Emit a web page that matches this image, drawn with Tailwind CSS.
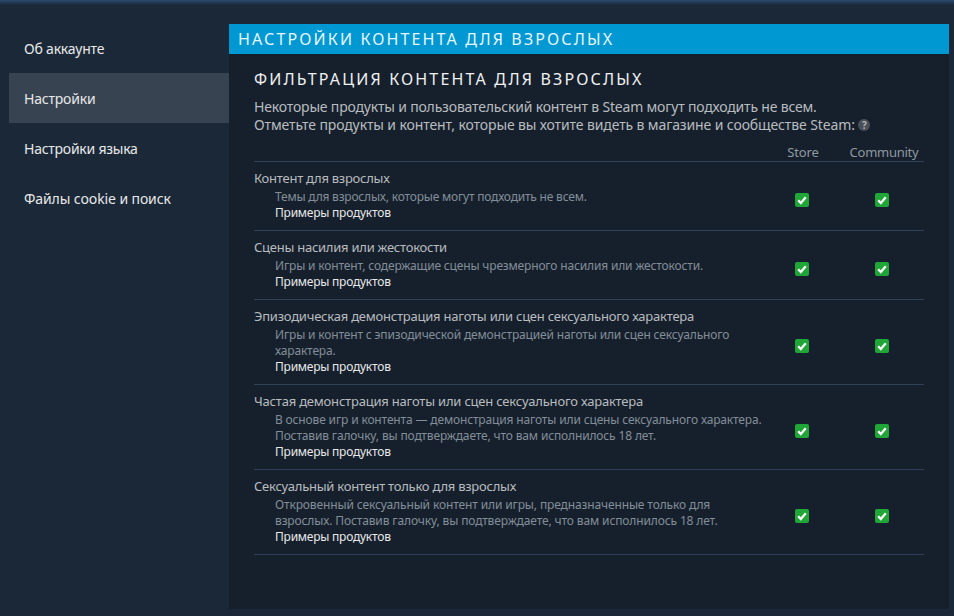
<!DOCTYPE html>
<html lang="ru">
<head>
    <meta charset="UTF-8">
    <title>Настройки контента</title>
    <script src="https://cdn.jsdelivr.net/npm/@tailwindcss/browser@4"></script>
</head>
<body class="bg-[#1b2838] h-[616px] w-[954px] overflow-hidden font-['Noto_Sans',sans-serif]">
    <div class="h-[5px] bg-gradient-to-b from-[#2a4a6e] to-[#1b2838]"></div>
    <div class="flex pt-[19px] pl-[9px] pr-[5px]">
        <!-- nav -->
        <nav class="w-[220px] -mt-[1px] text-[14px] tracking-[-0.2px] text-[#e8e8e8]">
            <div class="h-[50px] pl-[15px] flex items-center">Об аккаунте</div>
            <div class="h-[50px] pl-[15px] flex items-center bg-[#384352]">Настройки</div>
            <div class="h-[50px] pl-[15px] flex items-center tracking-[-0.25px]">Настройки языка</div>
            <div class="h-[50px] pl-[15px] flex items-center tracking-[-0.1px]">Файлы cookie и поиск</div>
        </nav>

        <main class="w-[720px] h-[585px] bg-[#16202d]">
            <div class="h-[30px] bg-[#0098d2] pl-[9px] flex items-center text-[16px] tracking-[2.13px] text-[#e6f5fb]">НАСТРОЙКИ КОНТЕНТА ДЛЯ ВЗРОСЛЫХ</div>
            <div class="px-[25px]">
                <h2 class="mt-[13px] text-[16px] leading-[24px] tracking-[2.16px] text-[#f0f0f0]">ФИЛЬТРАЦИЯ КОНТЕНТА ДЛЯ ВЗРОСЛЫХ</h2>
                <p class="mt-[7px] text-[14px] leading-[18px] text-[#b8bcbf]">
                    <span class="tracking-[-0.18px]">Некоторые продукты и пользовательский контент в Steam могут подходить не всем.</span><br>
                    <span class="tracking-[-0.12px]">Отметьте продукты и контент, которые вы хотите видеть в магазине и сообществе Steam:</span>
                    <span class="inline-flex w-[12px] h-[12px] rounded-full bg-[#4a4f57] text-[#b0b4b8] text-[10px] font-bold items-center justify-center align-[1px]">?</span>
                </p>
                <div class="flex h-[22px] mt-[6px] pt-[3px] text-[13px] tracking-[-0.25px] text-[#8f98a0] border-b border-[#2f4058]">
                    <div class="flex-1"></div>
                    <div class="w-[80px] pl-[2px] text-center leading-[18px] tracking-[-0.1px]">Store</div>
                    <div class="w-[80px] text-center pl-[4px] leading-[18px]">Community</div>
                    <div class="w-[2px]"></div>
                </div>

                <div class="flex h-[69px] border-b border-[#2f4058]">
                    <div class="flex-1 min-w-0 pt-[8px] whitespace-nowrap">
                        <div class="text-[13px] leading-[17px] tracking-[-0.25px] text-[#b8bcbf]">Контент для взрослых</div>
                        <div class="pl-[21px] text-[12px] leading-[16px] tracking-[-0.2px] text-[#838e98] mt-[2px]">Темы для взрослых, которые могут подходить не всем.</div>
                        <div class="pl-[21px] text-[12px] leading-[16px] tracking-[-0.23px] text-[#e8e8e8]">Примеры продуктов</div>
                    </div>
                    <div class="w-[80px] flex items-center justify-center pt-[8px]"><svg class="w-[14px] h-[14px]" viewBox="0 0 14 14"><rect width="14" height="14" rx="2" fill="#1fa637"/><path d="M3.2 7.2 L5.8 10 L10.8 4.2" fill="none" stroke="#fff" stroke-width="2.2"/></svg></div>
                    <div class="w-[80px] flex items-center justify-center pt-[8px]"><svg class="w-[14px] h-[14px]" viewBox="0 0 14 14"><rect width="14" height="14" rx="2" fill="#1fa637"/><path d="M3.2 7.2 L5.8 10 L10.8 4.2" fill="none" stroke="#fff" stroke-width="2.2"/></svg></div>
                    <div class="w-[2px]"></div>
                </div>

                <div class="flex h-[69px] border-b border-[#2f4058]">
                    <div class="flex-1 min-w-0 pt-[8px] whitespace-nowrap">
                        <div class="text-[13px] leading-[17px] tracking-[-0.25px] text-[#b8bcbf]">Сцены насилия или жестокости</div>
                        <div class="pl-[21px] text-[12px] leading-[16px] tracking-[-0.16px] text-[#838e98] mt-[2px]">Игры и контент, содержащие сцены чрезмерного насилия или жестокости.</div>
                        <div class="pl-[21px] text-[12px] leading-[16px] tracking-[-0.23px] text-[#e8e8e8]">Примеры продуктов</div>
                    </div>
                    <div class="w-[80px] flex items-center justify-center pt-[8px]"><svg class="w-[14px] h-[14px]" viewBox="0 0 14 14"><rect width="14" height="14" rx="2" fill="#1fa637"/><path d="M3.2 7.2 L5.8 10 L10.8 4.2" fill="none" stroke="#fff" stroke-width="2.2"/></svg></div>
                    <div class="w-[80px] flex items-center justify-center pt-[8px]"><svg class="w-[14px] h-[14px]" viewBox="0 0 14 14"><rect width="14" height="14" rx="2" fill="#1fa637"/><path d="M3.2 7.2 L5.8 10 L10.8 4.2" fill="none" stroke="#fff" stroke-width="2.2"/></svg></div>
                    <div class="w-[2px]"></div>
                </div>

                <div class="flex h-[85px] border-b border-[#2f4058]">
                    <div class="flex-1 min-w-0 pt-[8px] whitespace-nowrap">
                        <div class="text-[13px] leading-[17px] tracking-[-0.22px] text-[#b8bcbf]">Эпизодическая демонстрация наготы или сцен сексуального характера</div>
                        <div class="pl-[21px] text-[12px] leading-[16px] tracking-[-0.16px] text-[#838e98] mt-[2px]">Игры и контент с эпизодической демонстрацией наготы или сцен сексуального<br>характера.</div>
                        <div class="pl-[21px] text-[12px] leading-[16px] tracking-[-0.23px] text-[#e8e8e8]">Примеры продуктов</div>
                    </div>
                    <div class="w-[80px] flex items-center justify-center pt-[8px]"><svg class="w-[14px] h-[14px]" viewBox="0 0 14 14"><rect width="14" height="14" rx="2" fill="#1fa637"/><path d="M3.2 7.2 L5.8 10 L10.8 4.2" fill="none" stroke="#fff" stroke-width="2.2"/></svg></div>
                    <div class="w-[80px] flex items-center justify-center pt-[8px]"><svg class="w-[14px] h-[14px]" viewBox="0 0 14 14"><rect width="14" height="14" rx="2" fill="#1fa637"/><path d="M3.2 7.2 L5.8 10 L10.8 4.2" fill="none" stroke="#fff" stroke-width="2.2"/></svg></div>
                    <div class="w-[2px]"></div>
                </div>

                <div class="flex h-[85px] border-b border-[#2f4058]">
                    <div class="flex-1 min-w-0 pt-[8px] whitespace-nowrap">
                        <div class="text-[13px] leading-[17px] tracking-[-0.2px] text-[#b8bcbf]">Частая демонстрация наготы или сцен сексуального характера</div>
                        <div class="pl-[21px] text-[12px] leading-[16px] tracking-[-0.15px] text-[#838e98] mt-[2px]">В основе игр и контента — демонстрация наготы или сцены сексуального характера.<br>Поставив галочку, вы подтверждаете, что вам исполнилось 18 лет.</div>
                        <div class="pl-[21px] text-[12px] leading-[16px] tracking-[-0.23px] text-[#e8e8e8]">Примеры продуктов</div>
                    </div>
                    <div class="w-[80px] flex items-center justify-center pt-[8px]"><svg class="w-[14px] h-[14px]" viewBox="0 0 14 14"><rect width="14" height="14" rx="2" fill="#1fa637"/><path d="M3.2 7.2 L5.8 10 L10.8 4.2" fill="none" stroke="#fff" stroke-width="2.2"/></svg></div>
                    <div class="w-[80px] flex items-center justify-center pt-[8px]"><svg class="w-[14px] h-[14px]" viewBox="0 0 14 14"><rect width="14" height="14" rx="2" fill="#1fa637"/><path d="M3.2 7.2 L5.8 10 L10.8 4.2" fill="none" stroke="#fff" stroke-width="2.2"/></svg></div>
                    <div class="w-[2px]"></div>
                </div>

                <div class="flex h-[85px] border-b border-[#2f4058]">
                    <div class="flex-1 min-w-0 pt-[8px] whitespace-nowrap">
                        <div class="text-[13px] leading-[17px] tracking-[-0.25px] text-[#b8bcbf]">Сексуальный контент только для взрослых</div>
                        <div class="pl-[21px] text-[12px] leading-[16px] tracking-[-0.13px] text-[#838e98] mt-[2px]">Откровенный сексуальный контент или игры, предназначенные только для<br>взрослых. Поставив галочку, вы подтверждаете, что вам исполнилось 18 лет.</div>
                        <div class="pl-[21px] text-[12px] leading-[16px] tracking-[-0.23px] text-[#e8e8e8]">Примеры продуктов</div>
                    </div>
                    <div class="w-[80px] flex items-center justify-center pt-[8px]"><svg class="w-[14px] h-[14px]" viewBox="0 0 14 14"><rect width="14" height="14" rx="2" fill="#1fa637"/><path d="M3.2 7.2 L5.8 10 L10.8 4.2" fill="none" stroke="#fff" stroke-width="2.2"/></svg></div>
                    <div class="w-[80px] flex items-center justify-center pt-[8px]"><svg class="w-[14px] h-[14px]" viewBox="0 0 14 14"><rect width="14" height="14" rx="2" fill="#1fa637"/><path d="M3.2 7.2 L5.8 10 L10.8 4.2" fill="none" stroke="#fff" stroke-width="2.2"/></svg></div>
                    <div class="w-[2px]"></div>
                </div>
            </div>
        </main>
    </div>
</body>
</html>
